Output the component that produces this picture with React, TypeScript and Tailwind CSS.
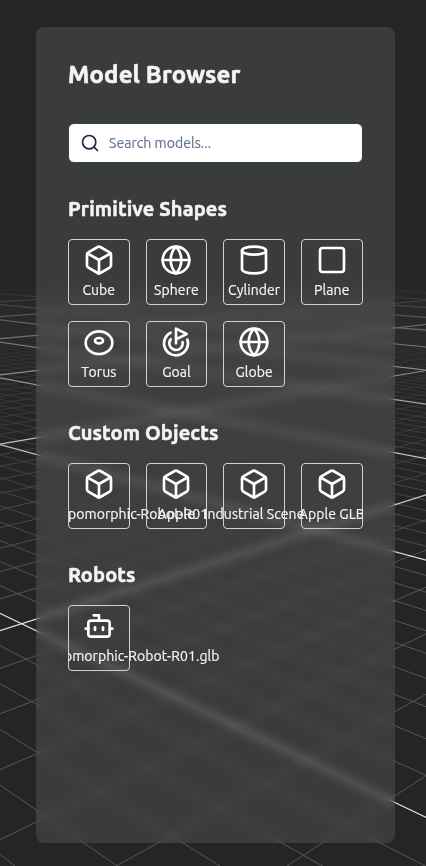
import { Bot, Box, Cylinder, Globe, Goal, Search, Square, Torus, type LucideIcon } from "lucide-react";

type Item = { label: string; icon: LucideIcon; labelClass?: string };
type Section = { title: string; items: Item[] };

const sections: Section[] = [
  {
    title: "Primitive Shapes",
    items: [
      { label: "Cube", icon: Box },
      { label: "Sphere", icon: Globe },
      { label: "Cylinder", icon: Cylinder },
      { label: "Plane", icon: Square },
      { label: "Torus", icon: Torus },
      { label: "Goal", icon: Goal },
      { label: "Globe", icon: Globe },
    ],
  },
  {
    title: "Custom Objects",
    items: [
      { label: "Anthropomorphic-Robot-R01", icon: Box, labelClass: "pl-[34px]" },
      { label: "Apple", icon: Box },
      { label: "Industrial Scene", icon: Box },
      { label: "Apple GLB", icon: Box },
    ],
  },
  {
    title: "Robots",
    items: [{ label: "Anthropomorphic-Robot-R01.glb", icon: Bot, labelClass: "pl-[33px]" }],
  },
];

const HORIZON = 224;
const FLOOR = 900;

// Lines of one direction meet at a point on the horizon and are evenly spaced in slope.
function gridLines(vanishX: number, sign: number, first: number, step: number) {
  return Array.from({ length: 150 }, (_, i) => {
    const n = i - 12;
    const k = first + (n * step) / 10;
    return { x1: vanishX, x2: vanishX + sign * k * (FLOOR - HORIZON), major: n % 10 === 0 };
  });
}

const lines = [...gridLines(-813, 1, 2.088, 1.597), ...gridLines(1275, -1, 3.135, 2.66)];

function GridLines({ major }: { major: boolean }) {
  return lines
    .filter((l) => l.major === major)
    .map((l, i) => (
      <line
        key={i}
        x1={l.x1}
        y1={HORIZON}
        x2={l.x2}
        y2={FLOOR}
        stroke={major ? "#e6e8e7" : "#6b6d6c"}
        strokeWidth={major ? 1.2 : 0.8}
      />
    ));
}

function FloorGrid() {
  return (
    <svg className="absolute inset-0 h-full w-full" viewBox="0 0 426 866" fill="none">
      <defs>
        <linearGradient id="majorFade" x1="0" y1="285" x2="0" y2="600" gradientUnits="userSpaceOnUse">
          <stop offset="0" stopColor="white" stopOpacity="0" />
          <stop offset="0.15" stopColor="white" stopOpacity="0.38" />
          <stop offset="0.5" stopColor="white" stopOpacity="0.8" />
          <stop offset="1" stopColor="white" stopOpacity="1" />
        </linearGradient>
        <linearGradient id="minorFade" x1="0" y1="285" x2="0" y2="600" gradientUnits="userSpaceOnUse">
          <stop offset="0" stopColor="white" stopOpacity="0" />
          <stop offset="0.15" stopColor="white" stopOpacity="0.15" />
          <stop offset="0.5" stopColor="white" stopOpacity="0.42" />
          <stop offset="1" stopColor="white" stopOpacity="0.88" />
        </linearGradient>
        <mask id="majorMask" maskUnits="userSpaceOnUse" x="0" y="0" width="426" height="866">
          <rect width="426" height="866" fill="url(#majorFade)" />
        </mask>
        <mask id="minorMask" maskUnits="userSpaceOnUse" x="0" y="0" width="426" height="866">
          <rect width="426" height="866" fill="url(#minorFade)" />
        </mask>
      </defs>
      <g mask="url(#minorMask)">
        <GridLines major={false} />
      </g>
      <g mask="url(#majorMask)">
        <GridLines major />
      </g>
    </svg>
  );
}

function ModelCard({ label, icon: Icon, labelClass = "" }: Item) {
  return (
    <button className="flex h-[66px] min-w-0 flex-col items-center gap-1 rounded border border-[#cfd1da] p-1">
      <Icon className="size-8 shrink-0 text-white" />
      <span
        className={`text-sm tracking-[0.08px] whitespace-nowrap text-gray-100 [-webkit-text-stroke:0.2px_currentColor] ${labelClass}`}
      >
        {label}
      </span>
    </button>
  );
}

export default function App() {
  return (
    <div className="relative h-[866px] w-[426px] overflow-hidden bg-[#242625] font-['Ubuntu','Noto_Sans',sans-serif]">
      <FloorGrid />
      <aside className="relative mt-[27px] ml-9 h-[816px] w-[358.6px] rounded-lg bg-white/10 p-8 backdrop-blur-[5px]">
        <div className="flex h-full flex-col gap-8 overflow-hidden">
          <h1 className="text-2xl font-bold tracking-[0.15px] text-gray-100 [-webkit-text-stroke:0.6px_currentColor]">
            Model Browser
          </h1>
          <label className="flex h-10 shrink-0 items-center rounded-md border border-slate-700 bg-white px-[11px]">
            <Search className="size-5 shrink-0 text-slate-800" />
            <input
              className="ml-[9px] w-full bg-transparent text-sm tracking-[0.05px] outline-none [-webkit-text-stroke:0.15px_currentColor] placeholder:text-slate-500"
              placeholder="Search models..."
            />
          </label>
          {sections.map((s) => (
            <section key={s.title} className="flex flex-col gap-4">
              <h2 className="text-xl font-bold tracking-[0.14px] text-gray-100 [-webkit-text-stroke:0.5px_currentColor]">
                {s.title}
              </h2>
              <div className="grid grid-cols-4 gap-4">
                {s.items.map((item) => (
                  <ModelCard key={item.label} {...item} />
                ))}
              </div>
            </section>
          ))}
        </div>
      </aside>
    </div>
  );
}
